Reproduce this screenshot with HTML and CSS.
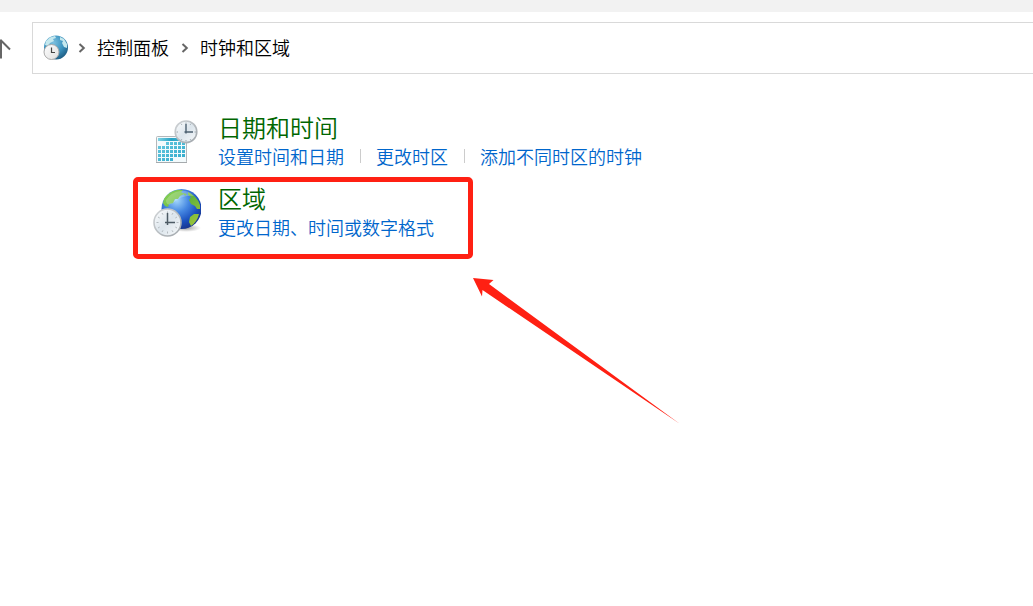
FILE: index.html
```
<!DOCTYPE html>
<html lang="zh-CN">
<head>
<meta charset="utf-8">
<meta name="viewport" content="width=device-width, initial-scale=1">
<title>时钟和区域</title>
<link rel="stylesheet" href="styles.css">
</head>
<body>
<div class="window-strip"></div>
<header class="toolbar">
  <button class="up-button" type="button" aria-label="向上">
    <svg width="20" height="22" viewBox="0 0 20 22" fill="none" stroke="#666" stroke-width="2"><path d="M10 21.500V3M1 12.500L10 3.500L19 12.500"/></svg>
  </button>
  <nav class="address" aria-label="地址">
    <svg class="address-icon" width="26" height="26" viewBox="0 0 26 26">
      <defs>
        <radialGradient id="sea" cx=".4" cy=".3" r=".75"><stop offset="0" stop-color="#7cc0df"/><stop offset=".55" stop-color="#3b93bf"/><stop offset="1" stop-color="#1c587e"/></radialGradient>
        <linearGradient id="dial" x1="0" y1="0" x2="1" y2="1"><stop offset="0" stop-color="#fff"/><stop offset="1" stop-color="#dedede"/></linearGradient>
      </defs>
      <circle cx="13" cy="12.500" r="12" fill="url(#sea)"/>
      <path d="M3 6L7 2.500L12 1L13 3L10 4L11 6L7 8L5 11L2 10ZM17 2L21 4L24 9L24 13L21 12L19 8L20 6L17 5Z" fill="#c5e8ee"/>
      <circle cx="8.500" cy="17" r="7.500" fill="url(#dial)" stroke="#aaa"/>
      <path d="M8.500 12.500V17.500H12" fill="none" stroke="#444" stroke-width="1.200"/>
    </svg>
    <svg class="chevron" width="8" height="10" viewBox="0 0 8 10"><path d="M1.500 1L5.800 5L1.500 9"/></svg>
    <a class="crumb" href="#panel">控制面板</a>
    <svg class="chevron" width="8" height="10" viewBox="0 0 8 10"><path d="M1.500 1L5.800 5L1.500 9"/></svg>
    <a class="crumb" href="#clock">时钟和区域</a>
  </nav>
</header>
<main class="categories">
  <section class="category">
    <svg class="category-icon" width="48" height="48" viewBox="0 0 48 48">
      <defs>
        <linearGradient id="cells" x1="0" y1="0" x2="1" y2="1"><stop offset="0" stop-color="#67c9df"/><stop offset="1" stop-color="#2fa9cb"/></linearGradient>
        <linearGradient id="bar" x1="0" y1="0" x2="1" y2="0"><stop offset="0" stop-color="#7fd3e4"/><stop offset=".5" stop-color="#27a2c4"/><stop offset="1" stop-color="#4fb8d2"/></linearGradient>
        <linearGradient id="rim" x1="0" y1="0" x2="1" y2="1"><stop offset="0" stop-color="#d0d4d7"/><stop offset="1" stop-color="#a0a6ab"/></linearGradient>
        <linearGradient id="face" x1="0" y1="0" x2="1" y2="1"><stop offset="0" stop-color="#fff"/><stop offset=".5" stop-color="#dce5ec"/><stop offset="1" stop-color="#f8fafb"/></linearGradient>
      </defs>
      <rect x="3.500" y="18.500" width="30" height="26" rx="1" fill="#f3fafc" stroke="#b3b8bb"/>
      <path d="M3 44.500H34" stroke="#a5aaad"/>
      <path d="M5 20H32V23H5Z" fill="url(#bar)"/>
      <path d="M13 24h3v3h-3zm4 0h3v3h-3zm4 0h3v3h-3zm4 0h3v3h-3zm4 0h3v3h-3zM5 28h3v3H5zm4 0h3v3H9zm4 0h3v3h-3zm4 0h3v3h-3zm4 0h3v3h-3zm4 0h3v3h-3zm4 0h3v3h-3zM5 32h3v3H5zm4 0h3v3H9zm4 0h3v3h-3zm4 0h3v3h-3zm4 0h3v3h-3zm4 0h3v3h-3zm4 0h3v3h-3zM5 36h3v3H5zm4 0h3v3H9zm4 0h3v3h-3zm4 0h3v3h-3zm4 0h3v3h-3zm4 0h3v3h-3zm4 0h3v3h-3zM5 40h3v3H5zm4 0h3v3H9zm4 0h3v3h-3zm4 0h3v3h-3z" fill="url(#cells)"/>
      <circle cx="33" cy="13.800" r="10.800" fill="url(#face)" stroke="url(#rim)" stroke-width="1.600"/>
      <path d="M33 4.500v1.500M33 22v1.500M23.500 14h1.500M41.500 14h1.500M28.200 5.800l.6 1M37.800 5.800l-.6 1M28.200 22.200l.6-1M37.800 22.200l-.6-1" stroke="#9aa5ad"/>
      <path d="M33 6V15.500M31.500 14H40" stroke="#4c6070" stroke-width="1.400"/>
    </svg>
    <div class="category-text">
      <h2 class="category-title"><a href="#datetime">日期和时间</a></h2>
      <ul class="tasks">
        <li><a href="#set">设置时间和日期</a></li>
        <li><a href="#zone">更改时区</a></li>
        <li><a href="#clocks">添加不同时区的时钟</a></li>
      </ul>
    </div>
  </section>
  <section class="category">
    <svg class="category-icon" width="48" height="48" viewBox="0 0 48 48">
      <defs>
        <radialGradient id="globe" cx=".38" cy=".28" r=".75"><stop offset="0" stop-color="#a3d6fb"/><stop offset=".4" stop-color="#4688e2"/><stop offset=".75" stop-color="#1a4fbd"/><stop offset="1" stop-color="#19348c"/></radialGradient>
        <linearGradient id="land" x1="0" y1="0" x2="1" y2="1"><stop offset="0" stop-color="#8fd65a"/><stop offset=".5" stop-color="#62b33b"/><stop offset="1" stop-color="#a8c83a"/></linearGradient>
        <radialGradient id="shade"><stop offset="0" stop-color="#555" stop-opacity=".6"/><stop offset="1" stop-color="#777" stop-opacity="0"/></radialGradient>
      </defs>
      <ellipse cx="33" cy="39" rx="15" ry="4" fill="url(#shade)"/>
      <circle cx="28.500" cy="20" r="20" fill="url(#globe)"/>
      <path d="M11 10Q15 3 24 1L30 1L28 3L31 5L27 7L25 10L22 10L20 14L16 15L15 18L12 17L10 14ZM35 3Q44 7 47 16L47 20L44 20L42 17L38 15L36 11L38 8L35 6ZM46 25Q44 33 38 37L36 33L37 28L41 25ZM30 4L34 5L32 7Z" fill="url(#land)"/>
      <path d="M13 11Q18 3 27 2Q35 1 41 7Q30 5 20 14Q13 18 13 11Z" fill="#fff" opacity=".22"/>
      <circle cx="14.500" cy="33.500" r="13.500" fill="url(#face)" stroke="url(#rim)" stroke-width="1.600"/>
      <path d="M14.500 22.500v2M14.500 42.500v2M3.500 33.500h2M23.500 33.500h2M9 24l1 1.700M20 24l-1 1.700M5 28l1.700 1M24 28l-1.700 1M5 39l1.700-1M24 39l-1.700-1M9 43l1-1.700M20 43l-1-1.700" stroke="#b4bbc0"/>
      <path d="M14.500 24V36M12 33.500H22" stroke="#4d5b65" stroke-width="1.500"/>
    </svg>
    <div class="category-text">
      <h2 class="category-title"><a href="#region">区域</a></h2>
      <ul class="tasks">
        <li><a href="#formats">更改日期、时间或数字格式</a></li>
      </ul>
    </div>
    <div class="highlight"></div>
    <svg class="pointer" width="208" height="147" viewBox="0 0 208 147" aria-hidden="true"><path d="M0 0L20.500 2L16 6L207 146L9.500 12L9 18.500Z" fill="#ff2013"/></svg>
  </section>
</main>
</body>
</html>
```

FILE: styles.css
```
* {
  box-sizing: border-box;
}

body {
  min-height: 100vh;
  margin: 0;
  background: #fff;
  color: #000;
  font-family: "Noto Sans CJK SC", sans-serif;
  font-size: 18px;
  font-weight: 350;
}

a {
  color: inherit;
  text-decoration: none;
}

a:hover {
  text-decoration: underline;
}

.window-strip {
  height: 12px;
  background: #f2f2f2;
}

.toolbar {
  display: flex;
  align-items: center;
  gap: 21px;
  margin-left: -9px;
  padding-top: 10px;
}

.up-button {
  display: flex;
  padding: 0;
  border: 0;
  background: none;
}

.address {
  display: flex;
  flex: 1;
  align-items: center;
  height: 52px;
  padding-left: 10px;
  border: 1px solid #d9d9d9;
  border-right: 0;
}

.chevron {
  margin: 0 11px 0 12px;
  fill: none;
  stroke: #666;
  stroke-width: 2;
}

.address-icon + .chevron {
  margin-left: 9px;
}

.crumb {
  padding-bottom: 2px;
  line-height: 26px;
}

.categories {
  display: flex;
  flex-direction: column;
  gap: 13px;
  padding: 37px 24px 24px 153px;
}

.category {
  position: relative;
  display: flex;
  gap: 17px;
}

.category-icon {
  flex: none;
  margin-top: 7px;
}

.category-title {
  margin: 0;
  color: #006600;
  font-size: 24px;
  font-weight: 350;
  line-height: 32px;
}

.tasks {
  display: flex;
  flex-wrap: wrap;
  margin: 0;
  padding: 0;
  color: #0066cc;
  line-height: 26px;
  list-style: none;
}

.tasks li {
  display: flex;
  align-items: center;
}

.tasks li + li::before {
  content: "";
  width: 1px;
  height: 14px;
  margin: 0 15px 0 16px;
  background: #ccc;
}

.highlight {
  position: absolute;
  top: -5px;
  left: -20px;
  width: 340px;
  height: 82px;
  border: 5px solid #ff2013;
  border-radius: 5px;
  pointer-events: none;
}

.pointer {
  position: absolute;
  top: 96px;
  left: 320px;
  pointer-events: none;
}
```
